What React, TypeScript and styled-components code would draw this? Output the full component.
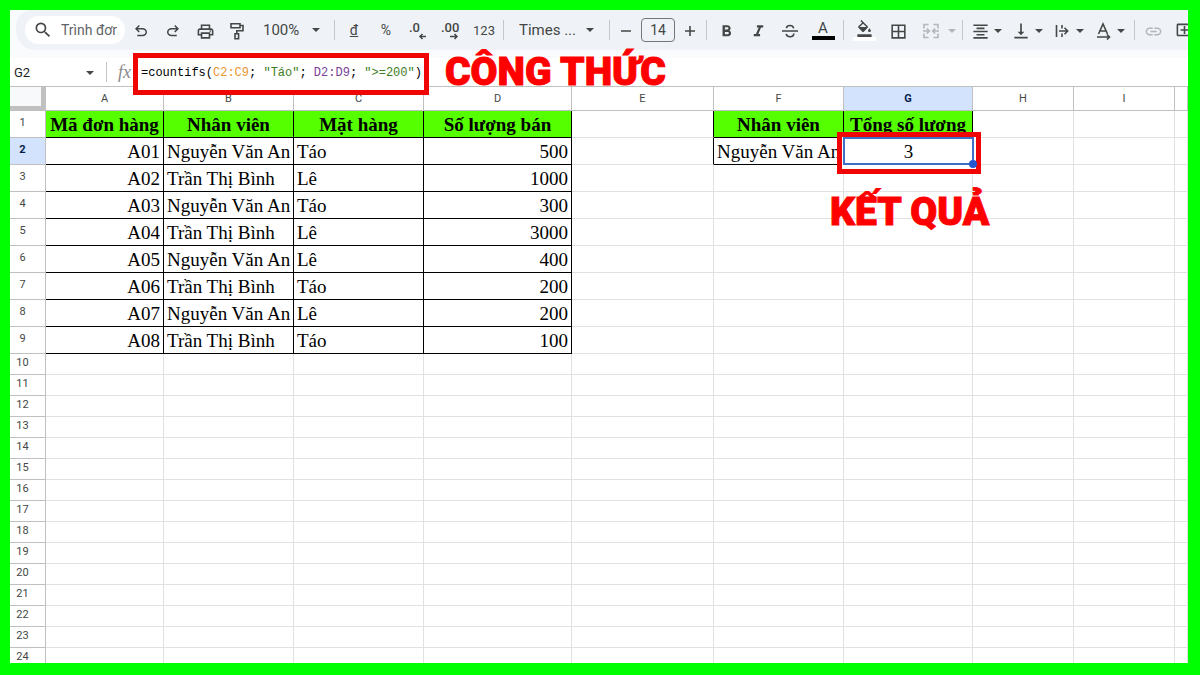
import React from "react";
import styled, { createGlobalStyle } from "styled-components";
import {
  MdSearch,
  MdOutlinePrint,
  MdFormatBold,
  MdFormatItalic,
  MdFormatColorFill,
  MdBorderAll,
  MdFormatAlignCenter,
  MdVerticalAlignBottom,
  MdLink,
  MdOutlineAddComment,
} from "react-icons/md";

const GlobalStyle = createGlobalStyle`
  * { box-sizing: border-box; }
  html, body { margin: 0; padding: 0; }
  body { font-family: Roboto, "Liberation Sans", sans-serif; color: #444746; overflow: hidden; }
  button, input, select { font-family: inherit; color: inherit; }
`;

const Frame = styled.main`
  display: flex;
  flex-direction: column;
  height: 100vh;
  border: solid #00ff00;
  border-width: 10px 12px 12px 10px;
  background: #fff;
  overflow: hidden;
`;

const ToolbarArea = styled.header`
  flex: none;
  height: 48px;
  padding-left: 6px;
  background: #f9fbfd;
  overflow: hidden;
`;

const Toolbar = styled.div`
  display: flex;
  align-items: center;
  height: 40px;
  padding-left: 9px;
  background: #eff3f8;
  border-radius: 16px 0 0 20px;
  overflow: hidden;
`;

const SearchPill = styled.label`
  flex: none;
  display: flex;
  align-items: center;
  gap: 8px;
  width: 100px;
  height: 28px;
  padding: 0 8px;
  border-radius: 14px;
  background: #fff;
`;

const SearchInput = styled.input`
  width: 56px;
  height: 24px;
  padding: 0;
  border: 0;
  outline: 0;
  background: transparent;
  font-size: 14px;
  &::placeholder { color: #5f6368; opacity: 1; }
`;

const ToolButton = styled.button<{ $w?: number; $muted?: boolean }>`
  flex: none;
  display: flex;
  align-items: center;
  justify-content: center;
  width: ${(p) => p.$w ?? 32}px;
  height: 32px;
  padding: 0;
  border: 0;
  background: transparent;
  color: ${(p) => (p.$muted ? "#b4b7ba" : "#444746")};
  font-size: ${(p) => (p.$w === 36 ? 13 : 14)}px;
  & > svg { margin-top: 2px; }
`;

const MenuCaret = styled(ToolButton)`
  width: 10px;
  margin-right: 5px;
`;

const Divider = styled.span<{ $l?: number; $r?: number }>`
  flex: none;
  width: 1px;
  height: 20px;
  margin: 0 ${(p) => p.$r ?? 4}px 0 ${(p) => p.$l ?? 4}px;
  background: #c7c7c7;
`;

const SelectWrap = styled.label<{ $w: number }>`
  flex: none;
  display: flex;
  align-items: center;
  justify-content: space-between;
  width: ${(p) => p.$w}px;
  padding-left: 10px;
`;

const PlainSelect = styled.select`
  appearance: none;
  flex: none;
  padding: 0;
  border: 0;
  outline: 0;
  background: transparent;
  font-size: 15px;
  line-height: 20px;
`;

const SizeInput = styled.input`
  flex: none;
  width: 34px;
  height: 24px;
  padding: 0;
  border: 1px solid #747775;
  border-radius: 4px;
  background: transparent;
  font-size: 14px;
  text-align: center;
`;

const Swatch = styled.span<{ $c: string }>`
  display: flex;
  flex-direction: column;
  align-items: center;
  width: 23px;
  font-size: 15px;
  line-height: 16px;
  border-bottom: 4px solid ${(p) => p.$c};
`;

const FormulaBar = styled.section`
  position: relative;
  z-index: 2;
  flex: none;
  display: flex;
  align-items: center;
  height: 29px;
  border-bottom: 1px solid #c0c0c0;
  background: #fff;
`;

const NameBox = styled.input`
  width: 72px;
  padding: 0 0 0 4px;
  border: 0;
  outline: 0;
  background: transparent;
  color: #1f1f1f;
  font-size: 13px;
`;

const CaretButton = styled(ToolButton)`
  height: 20px;
`;

const Fx = styled.span`
  margin-left: 7px;
  color: #8a8a8a;
  font: italic 18px "Liberation Serif", serif;
`;

const FormulaMark = styled.div`
  position: absolute;
  left: 123px;
  top: -5px;
  display: flex;
  width: 296px;
  height: 42px;
  padding: 6px 3px;
  border: 5px solid #f00505;
  background: #fff;
`;

const Formula = styled.div`
  outline: 0;
  color: #000;
  font: 12px/18px "Liberation Mono", monospace;
  white-space: pre;
`;

const Token = styled.span<{ $c: string }>`
  color: ${(p) => p.$c};
`;

const Caption = styled.strong`
  position: absolute;
  z-index: 4;
  color: #ff0000;
  font: 900 39px/34px Roboto, "Open Sans", sans-serif;
  -webkit-text-stroke: 1px #ff0000;
  white-space: nowrap;
`;

const FormulaCaption = styled(Caption)`
  left: 435px;
  top: -3px;
`;

const ResultCaption = styled(Caption)`
  left: -14px;
  top: 57px;
`;

const SheetArea = styled.section`
  flex: 1;
  min-height: 0;
  overflow: hidden;
`;

const Sheet = styled.table`
  width: 100%;
  table-layout: fixed;
  border-collapse: separate;
  border-spacing: 0;
`;

const ColHead = styled.th<{ $on?: boolean }>`
  height: 24px;
  padding: 0;
  border: solid #c0c0c0;
  border-width: 0 1px 1px 0;
  background: ${(p) => (p.$on ? "#d3e3fd" : "#fff")};
  color: ${(p) => (p.$on ? "#041e49" : "#444746")};
  font-size: 11px;
  line-height: 14px;
  font-weight: ${(p) => (p.$on ? 700 : 400)};
  text-align: center;
`;

const Corner = styled.td`
  padding: 0;
  border: solid #c0c0c0;
  border-width: 0 5px 5px 0;
  background: #f8f9fa;
`;

const RowHead = styled.th<{ $on?: boolean }>`
  padding: 0 10px 2px 0;
  border: solid #c0c0c0;
  border-width: 0 1px 1px 0;
  background: ${(p) => (p.$on ? "#d3e3fd" : "#fff")};
  color: ${(p) => (p.$on ? "#041e49" : "#444746")};
  font-size: 11px;
  line-height: 14px;
  font-weight: ${(p) => (p.$on ? 700 : 400)};
  text-align: center;
`;

const Row = styled.tr<{ $h: number }>`
  height: ${(p) => p.$h}px;
`;

const Cell = styled.td<{ $align?: string; $title?: boolean; $right?: boolean; $bottom?: boolean }>`
  position: relative;
  padding: 1px 3px 0;
  border-style: solid;
  border-width: 0 1px 1px 0;
  border-right-color: ${(p) => (p.$right ? "#000" : "#e1e1e1")};
  border-bottom-color: ${(p) => (p.$bottom ? "#000" : "#e1e1e1")};
  background: ${(p) => (p.$title ? "#55ff00" : "#fff")};
  color: #000;
  font-family: "Liberation Serif", serif;
  font-size: 19px;
  line-height: 20px;
  font-weight: ${(p) => (p.$title ? 700 : 400)};
  text-align: ${(p) => p.$align ?? "left"};
  white-space: nowrap;
`;

const ResultMark = styled.div`
  position: absolute;
  z-index: 3;
  left: -7px;
  top: -6px;
  width: 144px;
  height: 42px;
  border: 5px solid #f00505;
  background: #fff;
`;

const Selection = styled.div`
  position: relative;
  width: 131px;
  height: 28px;
  margin-left: 1px;
  border: 2px solid #3f6fc4;
  line-height: 26px;
  text-align: center;
  &::after {
    content: "";
    position: absolute;
    right: -5px;
    bottom: -5px;
    width: 8px;
    height: 8px;
    border-radius: 50%;
    background: #2257d0;
  }
`;

const Caret = () => (
  <svg width="8" height="4" viewBox="0 0 8 4" aria-hidden="true">
    <path d="M0 0h8L4 4z" fill="currentColor" />
  </svg>
);

const Symbol = ({ d }: { d: string }) => (
  <svg width="18" height="18" viewBox="0 -960 960 960" fill="currentColor" aria-hidden="true">
    <path d={d} />
  </svg>
);

const Lines = ({ d, w = 18 }: { d: string; w?: number }) => (
  <svg width={w} height="18" viewBox={`0 0 ${w} 18`} fill="none" stroke="currentColor" strokeWidth="1.6" aria-hidden="true">
    <path d={d} />
  </svg>
);

const UNDO =
  "M280-200v-80h284q63 0 109.5-40T720-420q0-60-46.5-100T564-560H312l104 104-56 56-200-200 200-200 56 56-104 104h252q97 0 166.5 63T800-420q0 94-69.5 157T564-200H280Z";
const REDO =
  "M396-200q-97 0-166.5-63T160-420q0-94 69.5-157T396-640h252L544-744l56-56 200 200-200 200-56-56 104-104H396q-63 0-109.5 40T240-420q0 60 46.5 100T396-280h284v80H396Z";
const ROLLER = "M3 1.8h9v4H3zM12 3.5h3v5.2H8.8v3M7 11.8h3.6v5H7z";
const STRIKE =
  "M1 9h16M12.700 6.300C12.300 4.500 11 3.500 9 3.500S5.500 4.600 5.500 6.200M5.200 11.800C5.600 13.700 7 14.700 9.100 14.700s3.700-1.100 3.700-3.100";
const MERGE =
  "M6.500 2.500H2v4M6.500 15.500H2v-4M11.500 2.500H16v4M11.500 15.500H16v-4M1 9h6M4.800 6.500L7.300 9l-2.500 2.500M17 9h-6M13.200 6.500L10.700 9l2.500 2.500";
const WRAP = "M2.500 3v12M8 3v3.500M8 11.500V15M5 9h8.500M10.500 5.800L13.700 9l-3.200 3.200";
const ROTATE = "M3.500 12L8 2l4.500 10M5 9h6M2 15h12M12 12.500l2.500 2.500L12 17.500";

const Decimals = ({ digits, more }: { digits: string; more?: boolean }) => (
  <svg width="20" height="20" viewBox="0 0 20 20" aria-hidden="true">
    <text x="1" y="11" fill="currentColor" fontFamily="Roboto, sans-serif" fontSize="13" fontWeight="500">
      {digits}
    </text>
    <path
      d={more ? "M10 15.500h7M14.500 13l2.500 2.500-2.500 2.500" : "M18 15.500h-6M14.500 13L12 15.500l2.500 2.500"}
      fill="none"
      stroke="currentColor"
      strokeWidth="1.5"
    />
  </svg>
);

const COLUMNS = ["A", "B", "C", "D", "E", "F", "G", "H", "I", ""];
const WIDTHS = [118, 130, 130, 148, 142, 130, 129, 101, 101];
const ALIGN = ["right", "left", "left", "right"];
const DATA = [
  ["Mã đơn hàng", "Nhân viên", "Mặt hàng", "Số lượng bán"],
  ["A01", "Nguyễn Văn An", "Táo", "500"],
  ["A02", "Trần Thị Bình", "Lê", "1000"],
  ["A03", "Nguyễn Văn An", "Táo", "300"],
  ["A04", "Trần Thị Bình", "Lê", "3000"],
  ["A05", "Nguyễn Văn An", "Lê", "400"],
  ["A06", "Trần Thị Bình", "Táo", "200"],
  ["A07", "Nguyễn Văn An", "Lê", "200"],
  ["A08", "Trần Thị Bình", "Táo", "100"],
];
const SUMMARY: Record<string, string> = {
  "0-5": "Nhân viên",
  "0-6": "Tổng số lượng",
  "1-5": "Nguyễn Văn An",
};
const ROW_COUNT = 24;

function SheetCell({ r, c }: { r: number; c: number }) {
  const inData = r < DATA.length && c < 4;
  const inSummary = r < 2 && (c === 5 || c === 6);
  if (r === 1 && c === 6) {
    return (
      <Cell $right $bottom>
        <ResultMark>
          <Selection>3</Selection>
        </ResultMark>
        <ResultCaption>KẾT QUẢ</ResultCaption>
      </Cell>
    );
  }
  const title = r === 0 && (inData || inSummary);
  return (
    <Cell
      $title={title}
      $align={title ? "center" : ALIGN[c]}
      $right={inData || inSummary || (r < 2 && c === 4)}
      $bottom={inData || inSummary}
    >
      {inData ? DATA[r][c] : SUMMARY[`${r}-${c}`]}
    </Cell>
  );
}

export default function App() {
  return (
    <Frame>
      <GlobalStyle />
      <ToolbarArea>
        <Toolbar role="toolbar" aria-label="Định dạng">
          <SearchPill>
            <MdSearch size={20} />
            <SearchInput aria-label="Trình đơn" placeholder="Trình đơn" />
          </SearchPill>
          <ToolButton aria-label="Hủy"><Symbol d={UNDO} /></ToolButton>
          <ToolButton aria-label="Làm lại"><Symbol d={REDO} /></ToolButton>
          <ToolButton aria-label="In"><MdOutlinePrint size={19} /></ToolButton>
          <ToolButton aria-label="Sao chép định dạng"><Lines d={ROLLER} /></ToolButton>
          <SelectWrap $w={67}>
            <PlainSelect aria-label="Thu phóng"><option>100%</option></PlainSelect>
            <Caret />
          </SelectWrap>
          <Divider $l={14} $r={3} />
          <ToolButton aria-label="Tiền tệ"><u>đ</u></ToolButton>
          <ToolButton aria-label="Phần trăm">%</ToolButton>
          <ToolButton aria-label="Giảm số thập phân"><Decimals digits=".0" /></ToolButton>
          <ToolButton aria-label="Tăng số thập phân"><Decimals digits=".00" more /></ToolButton>
          <ToolButton $w={36} aria-label="Định dạng số">123</ToolButton>
          <Divider $l={1} $r={5} />
          <SelectWrap $w={85}>
            <PlainSelect aria-label="Phông chữ"><option>Times ...</option></PlainSelect>
            <Caret />
          </SelectWrap>
          <Divider $l={15} $r={0} />
          <ToolButton $w={31} aria-label="Giảm cỡ chữ"><Lines w={12} d="M1 9h10" /></ToolButton>
          <SizeInput aria-label="Cỡ chữ" defaultValue="14" />
          <ToolButton $w={30} aria-label="Tăng cỡ chữ"><Lines w={12} d="M1 9h10M6 4v10" /></ToolButton>
          <Divider $l={1} $r={3} />
          <ToolButton aria-label="Đậm"><MdFormatBold size={19} /></ToolButton>
          <ToolButton aria-label="Nghiêng"><MdFormatItalic size={19} /></ToolButton>
          <ToolButton aria-label="Gạch ngang"><Lines d={STRIKE} /></ToolButton>
          <ToolButton $w={34} aria-label="Màu văn bản"><Swatch $c="#000">A</Swatch></ToolButton>
          <Divider $l={3} />
          <ToolButton aria-label="Màu nền"><Swatch $c="#fff"><MdFormatColorFill size={17} /></Swatch></ToolButton>
          <ToolButton $w={36} aria-label="Đường viền"><MdBorderAll size={19} /></ToolButton>
          <ToolButton $w={30} $muted aria-label="Hợp nhất ô"><Lines d={MERGE} /></ToolButton>
          <ToolButton $w={12} $muted aria-label="Tùy chọn hợp nhất"><Caret /></ToolButton>
          <Divider />
          <ToolButton $w={26} aria-label="Căn ngang"><MdFormatAlignCenter size={19} /></ToolButton>
          <MenuCaret aria-label="Tùy chọn căn ngang"><Caret /></MenuCaret>
          <ToolButton $w={26} aria-label="Căn dọc"><MdVerticalAlignBottom size={20} /></ToolButton>
          <MenuCaret aria-label="Tùy chọn căn dọc"><Caret /></MenuCaret>
          <ToolButton $w={26} aria-label="Xuống dòng"><Lines d={WRAP} w={16} /></ToolButton>
          <MenuCaret aria-label="Tùy chọn xuống dòng"><Caret /></MenuCaret>
          <ToolButton $w={26} aria-label="Xoay văn bản"><Lines d={ROTATE} w={16} /></ToolButton>
          <MenuCaret aria-label="Tùy chọn xoay"><Caret /></MenuCaret>
          <Divider $l={3} $r={3} />
          <ToolButton $w={30} $muted aria-label="Chèn liên kết"><MdLink size={19} /></ToolButton>
          <ToolButton aria-label="Chèn nhận xét"><MdOutlineAddComment size={19} /></ToolButton>
        </Toolbar>
      </ToolbarArea>

      <FormulaBar>
        <NameBox aria-label="Hộp tên" defaultValue="G2" />
        <CaretButton $w={16} aria-label="Mở hộp tên"><Caret /></CaretButton>
        <Divider $l={8} $r={4} />
        <Fx>fx</Fx>
        <FormulaMark>
          <Formula role="textbox" aria-label="Công thức" contentEditable suppressContentEditableWarning spellCheck={false}>
            =countifs(<Token $c="#e8962e">C2:C9</Token>; <Token $c="#3b7d23">"Táo"</Token>;{" "}
            <Token $c="#7b3f98">D2:D9</Token>; <Token $c="#3b7d23">"&gt;=200"</Token>)
          </Formula>
        </FormulaMark>
        <FormulaCaption>CÔNG THỨC</FormulaCaption>
      </FormulaBar>

      <SheetArea>
        <Sheet>
          <colgroup>
            <col width={36} />
            {WIDTHS.map((w, i) => <col key={i} width={w} />)}
            <col />
          </colgroup>
          <thead>
            <tr>
              <Corner />
              {COLUMNS.map((c, i) => <ColHead key={i} scope="col" $on={c === "G"}>{c}</ColHead>)}
            </tr>
          </thead>
          <tbody>
            {Array.from({ length: ROW_COUNT }, (_, r) => (
              <Row key={r} $h={r < DATA.length ? 27 : 21}>
                <RowHead scope="row" $on={r === 1}>{r + 1}</RowHead>
                {COLUMNS.map((_, c) => <SheetCell key={c} r={r} c={c} />)}
              </Row>
            ))}
          </tbody>
        </Sheet>
      </SheetArea>
    </Frame>
  );
}
